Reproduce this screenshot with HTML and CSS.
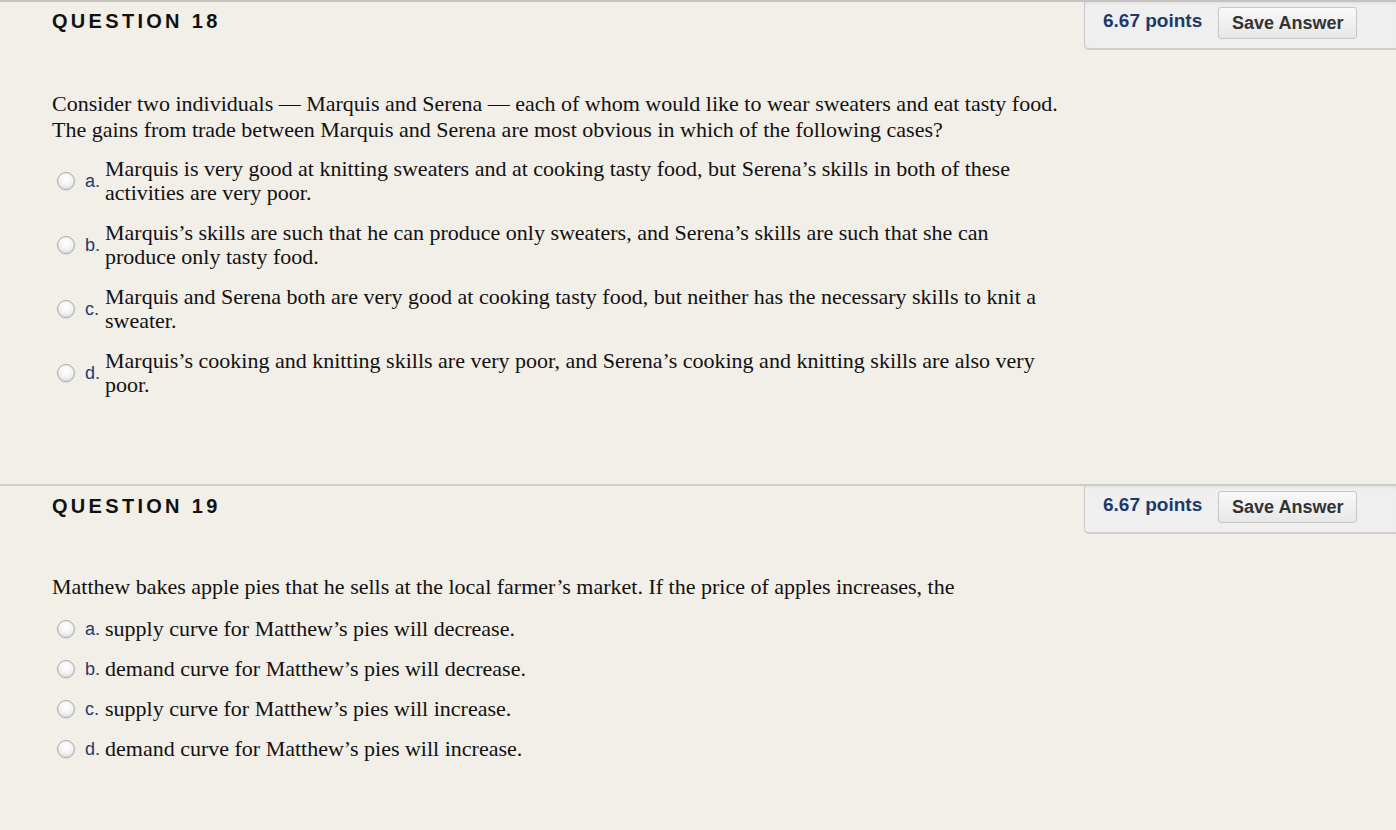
FILE: index.html
```html
<!DOCTYPE html>
<html>
<head>
<meta charset="utf-8">
<link rel="stylesheet" href="styles.css">
</head>
<body>
<div class="question q18">
  <div class="q-head">
    <h3 class="q-title">QUESTION 18</h3>
    <div class="q-points">
      <span class="points">6.67 points</span>
      <button class="save">Save Answer</button>
    </div>
  </div>
  <div class="q-body">
    <p class="q-text">Consider two individuals — Marquis and Serena — each of whom would like to wear sweaters and eat tasty food. The gains from trade between Marquis and Serena are most obvious in which of the following cases?</p>
    <ul class="options">
      <li class="opt"><span class="radio"></span><span class="lbl">a.</span><span class="otext">Marquis is very good at knitting sweaters and at cooking tasty food, but Serena’s skills in both of these activities are very poor.</span></li>
      <li class="opt"><span class="radio"></span><span class="lbl">b.</span><span class="otext">Marquis’s skills are such that he can produce only sweaters, and Serena’s skills are such that she can produce only tasty food.</span></li>
      <li class="opt"><span class="radio"></span><span class="lbl">c.</span><span class="otext">Marquis and Serena both are very good at cooking tasty food, but neither has the necessary skills to knit a sweater.</span></li>
      <li class="opt"><span class="radio"></span><span class="lbl">d.</span><span class="otext">Marquis’s cooking and knitting skills are very poor, and Serena’s cooking and knitting skills are also very poor.</span></li>
    </ul>
  </div>
</div>
<div class="question q19">
  <div class="q-head">
    <h3 class="q-title">QUESTION 19</h3>
    <div class="q-points">
      <span class="points">6.67 points</span>
      <button class="save">Save Answer</button>
    </div>
  </div>
  <div class="q-body">
    <p class="q-text">Matthew bakes apple pies that he sells at the local farmer’s market. If the price of apples increases, the</p>
    <ul class="options">
      <li class="opt"><span class="radio"></span><span class="lbl">a.</span><span class="otext">supply curve for Matthew’s pies will decrease.</span></li>
      <li class="opt"><span class="radio"></span><span class="lbl">b.</span><span class="otext">demand curve for Matthew’s pies will decrease.</span></li>
      <li class="opt"><span class="radio"></span><span class="lbl">c.</span><span class="otext">supply curve for Matthew’s pies will increase.</span></li>
      <li class="opt"><span class="radio"></span><span class="lbl">d.</span><span class="otext">demand curve for Matthew’s pies will increase.</span></li>
    </ul>
  </div>
</div>
</body>
</html>
```

FILE: styles.css
```css
html, body {
  margin: 0;
  padding: 0;
  background: #f2eee8;
}
body {
  font-family: "Liberation Serif", "Times New Roman", serif;
  color: #111;
  height: 830px;
  overflow: hidden;
}
.question {
  border-top: 2px solid #cfcdcb;
}
.q18 {
  border-top-color: #c4c3c2;
  padding-bottom: 87px;
}
.q-head {
  display: flex;
  justify-content: space-between;
  align-items: flex-start;
}
.q-title {
  margin: 0;
  padding: 7px 0 0 52px;
  font-family: "Liberation Sans", Arial, sans-serif;
  font-weight: bold;
  font-size: 20px;
  line-height: 24px;
  letter-spacing: 3.3px;
  color: #111;
}
.q19 .q-title {
  padding-top: 8px;
}
.q-points {
  width: 293px;
  height: 41px;
  padding: 5px 0 0 18px;
  display: flex;
  align-items: flex-start;
  gap: 16px;
  background: #efefef;
  border-left: 1px solid #c9c9c9;
  border-bottom: 2px solid #cdcdcd;
  border-bottom-left-radius: 5px;
  box-shadow: inset 0 3px 4px -3px rgba(0,0,0,0.12);
}
.points {
  margin-top: 4px;
  font-family: "Liberation Sans", Arial, sans-serif;
  font-weight: bold;
  font-size: 19px;
  line-height: 20px;
  color: #1b3a6b;
}
.save {
  width: 139px;
  height: 32px;
  padding: 0;
  font-family: "Liberation Sans", Arial, sans-serif;
  font-weight: bold;
  font-size: 18px;
  color: #333;
  background: linear-gradient(#f9f9f9, #e7e7e7);
  border: 1px solid #c6c6c6;
  border-radius: 3px;
}
.q-body {
  padding: 41px 0 0 52px;
}
.q-text {
  margin: 0;
  width: 1040px;
  font-size: 22px;
  line-height: 26px;
}
.q19 .q-text {
  margin-top: -1px;
}
.options {
  list-style: none;
  margin: 14px 0 0 0;
  padding: 0 0 0 5px;
  display: flex;
  flex-direction: column;
  gap: 16px;
}
.q19 .options {
  margin-top: 17px;
}
.opt {
  display: flex;
  align-items: center;
}
.radio {
  flex: none;
  width: 16px;
  height: 16px;
  border: 1px solid #a9a9a9;
  border-radius: 50%;
  background: radial-gradient(circle at 50% 40%, #ffffff 0%, #f4f4f4 45%, #d6d6d6 100%);
  box-shadow: 0 1px 1px rgba(0,0,0,0.08);
  margin-right: 10px;
}
.lbl {
  flex: none;
  width: 20px;
  font-family: "Liberation Sans", Arial, sans-serif;
  font-size: 18px;
  color: #1d3c6e;
}
.otext {
  width: 940px;
  font-size: 22px;
  line-height: 24px;
}
```
